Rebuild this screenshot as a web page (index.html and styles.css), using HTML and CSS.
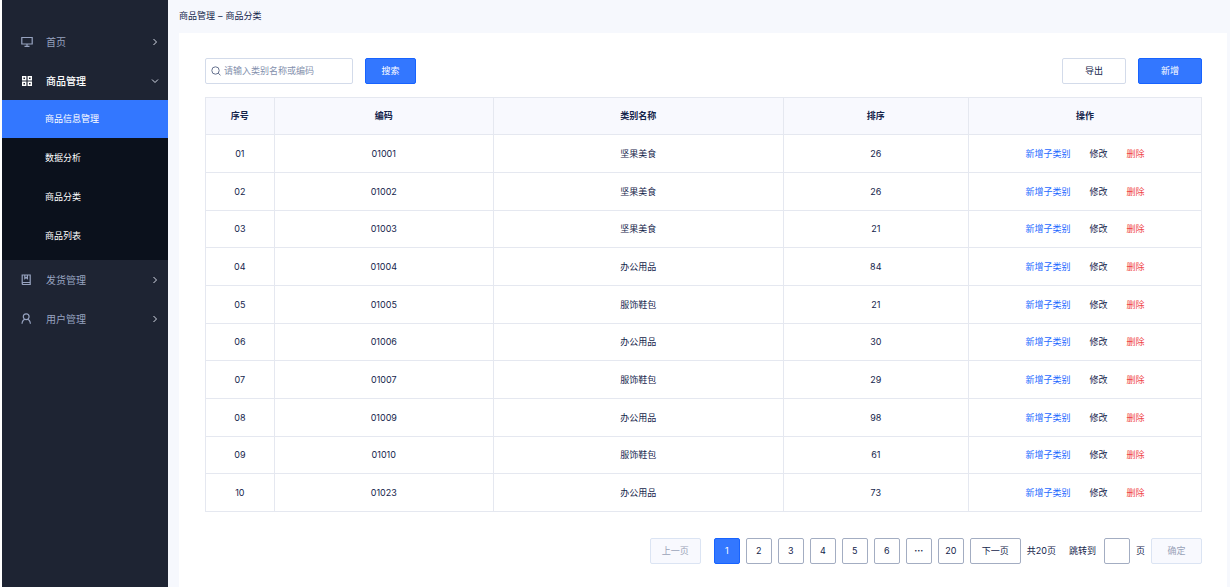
FILE: index.html
```html
<!DOCTYPE html>
<html lang="zh-CN">
<head>
<meta charset="utf-8">
<title>商品分类</title>
<meta name="viewport" content="width=device-width, initial-scale=1">
<link rel="stylesheet" href="styles.css">
</head>
<body>
<div class="layout">
  <nav class="sidebar" aria-label="主菜单">
    <a class="menu-item" href="#">
      <svg class="menu-icon" viewBox="0 0 12 12"><path d="M.8 1.500h10.400v6.500H.8zM6 8v2M3.500 10.300h5"/></svg>
      <span class="menu-label">首页</span>
      <svg class="arrow" viewBox="0 0 8 8"><path d="M2.500 1l3 3-3 3"/></svg>
    </a>
    <a class="menu-item open" href="#">
      <svg class="menu-icon bold" viewBox="0 0 12 12"><path d="M1.700 1.700h3v3h-3zM7.300 1.700h3v3h-3zM1.700 7.200h3v3h-3zM7.300 7.200h3v3h-3z"/></svg>
      <span class="menu-label">商品管理</span>
      <svg class="arrow" viewBox="0 0 8 8"><path d="M1 2.500l3 3 3-3"/></svg>
    </a>
    <div class="submenu">
      <a class="sub-item active" href="#">商品信息管理</a>
      <a class="sub-item" href="#">数据分析</a>
      <a class="sub-item" href="#">商品分类</a>
      <a class="sub-item" href="#">商品列表</a>
    </div>
    <a class="menu-item" href="#">
      <svg class="menu-icon" viewBox="0 0 12 12"><path d="M1.200 9.500V1h8v9.500h-7q-1 0-1-1t1-1h7M3.800 1v3.600l1.300-1 1.300 1V1"/></svg>
      <span class="menu-label">发货管理</span>
      <svg class="arrow" viewBox="0 0 8 8"><path d="M2.500 1l3 3-3 3"/></svg>
    </a>
    <a class="menu-item" href="#">
      <svg class="menu-icon" viewBox="0 0 12 12"><circle cx="5.200" cy="3.700" r="2.900"/><path d="M1 10.700q.4-4 3-4.400M9.400 10.700q-.4-4-3-4.400"/></svg>
      <span class="menu-label">用户管理</span>
      <svg class="arrow" viewBox="0 0 8 8"><path d="M2.500 1l3 3-3 3"/></svg>
    </a>
  </nav>

  <main class="main">
    <div class="breadcrumb"><span>商品管理</span><span>–</span><span>商品分类</span></div>
    <section class="card">
      <div class="toolbar">
        <label class="search">
          <svg class="search-icon" viewBox="0 0 10 10"><circle cx="4.500" cy="4.500" r="3.700"/><path d="M7.200 7.200L9.500 9.300"/></svg>
          <input class="search-input" type="text" aria-label="搜索" placeholder="请输入类别名称或编码">
        </label>
        <button class="btn primary" type="button">搜索</button>
        <span class="spacer"></span>
        <button class="btn wide" type="button">导出</button>
        <button class="btn wide primary" type="button">新增</button>
      </div>

      <table class="table">
        <colgroup><col class="col-no"><col class="col-code"><col class="col-name"><col class="col-sort"><col class="col-ops"></colgroup>
        <thead><tr><th>序号</th><th>编码</th><th>类别名称</th><th>排序</th><th>操作</th></tr></thead>
        <tbody>
          <tr><td>01</td><td>01001</td><td>坚果美食</td><td>26</td><td><div class="ops"><a class="add" href="#">新增子类别</a><a href="#">修改</a><a class="del" href="#">删除</a></div></td></tr>
          <tr><td>02</td><td>01002</td><td>坚果美食</td><td>26</td><td><div class="ops"><a class="add" href="#">新增子类别</a><a href="#">修改</a><a class="del" href="#">删除</a></div></td></tr>
          <tr><td>03</td><td>01003</td><td>坚果美食</td><td>21</td><td><div class="ops"><a class="add" href="#">新增子类别</a><a href="#">修改</a><a class="del" href="#">删除</a></div></td></tr>
          <tr><td>04</td><td>01004</td><td>办公用品</td><td>84</td><td><div class="ops"><a class="add" href="#">新增子类别</a><a href="#">修改</a><a class="del" href="#">删除</a></div></td></tr>
          <tr><td>05</td><td>01005</td><td>服饰鞋包</td><td>21</td><td><div class="ops"><a class="add" href="#">新增子类别</a><a href="#">修改</a><a class="del" href="#">删除</a></div></td></tr>
          <tr><td>06</td><td>01006</td><td>办公用品</td><td>30</td><td><div class="ops"><a class="add" href="#">新增子类别</a><a href="#">修改</a><a class="del" href="#">删除</a></div></td></tr>
          <tr><td>07</td><td>01007</td><td>服饰鞋包</td><td>29</td><td><div class="ops"><a class="add" href="#">新增子类别</a><a href="#">修改</a><a class="del" href="#">删除</a></div></td></tr>
          <tr><td>08</td><td>01009</td><td>办公用品</td><td>98</td><td><div class="ops"><a class="add" href="#">新增子类别</a><a href="#">修改</a><a class="del" href="#">删除</a></div></td></tr>
          <tr><td>09</td><td>01010</td><td>服饰鞋包</td><td>61</td><td><div class="ops"><a class="add" href="#">新增子类别</a><a href="#">修改</a><a class="del" href="#">删除</a></div></td></tr>
          <tr><td>10</td><td>01023</td><td>办公用品</td><td>73</td><td><div class="ops"><a class="add" href="#">新增子类别</a><a href="#">修改</a><a class="del" href="#">删除</a></div></td></tr>
        </tbody>
      </table>

      <div class="pager">
        <button class="btn prev" type="button" disabled>上一页</button>
        <button class="page primary" type="button">1</button>
        <button class="page" type="button">2</button>
        <button class="page" type="button">3</button>
        <button class="page" type="button">4</button>
        <button class="page" type="button">5</button>
        <button class="page" type="button">6</button>
        <button class="page more" type="button" aria-label="更多">···</button>
        <button class="page" type="button">20</button>
        <button class="btn next" type="button">下一页</button>
        <span class="total">共20页</span>
        <label class="jump">跳转到 <input class="page" type="text" aria-label="页码"></label>
        <span>页</span>
        <button class="btn" type="button" disabled>确定</button>
      </div>
    </section>
  </main>
</div>
</body>
</html>
```
FILE: styles.css
```css
* { box-sizing: border-box; }

body {
  margin: 0;
  background: #f6f8fd;
  color: #14244b;
  font: 9px/14px Inter, "Noto Sans CJK SC", sans-serif;
}

a { color: inherit; text-decoration: none; }

button, input { font: inherit; color: inherit; }

svg { fill: none; stroke: currentColor; }

.layout { display: flex; min-height: 100vh; }

/* Sidebar */
.sidebar {
  flex: none;
  width: 168px;
  padding-top: 22px;
  border-left: 2px solid #fff;
  background: #1e2433;
}

.menu-item {
  display: flex;
  align-items: center;
  height: 39px;
  padding: 0 9px 0 19px;
  color: #97a3c0;
  font-size: 10px;
}

.menu-item.open { color: #fff; font-weight: 500; }
.menu-icon { width: 12px; height: 12px; margin-right: 13px; stroke-width: 1.2; }
.menu-icon.bold { stroke-width: 1.4; }
.menu-label { flex: 1; }
.arrow { width: 8px; height: 8px; color: #d5dae6; }

.submenu { padding-bottom: 5px; background: #0b111c; }

.sub-item {
  display: flex;
  align-items: center;
  height: 39px;
  padding-left: 43px;
  color: #fff;
}

.sub-item.active { height: 38px; background: #3377ff; }

/* Content */
.main {
  display: flex;
  flex: 1;
  flex-direction: column;
  min-width: 0;
  padding: 0 3px 0 11px;
}

.breadcrumb { display: flex; gap: 3px; padding: 9px 0 10px; }

.card { flex: 1; padding: 25px 25px 23px 26px; background: #fff; }

.toolbar { display: flex; gap: 12px; margin-bottom: 13px; }
.spacer { flex: 1; }

.search {
  display: flex;
  align-items: center;
  gap: 3px;
  width: 148px;
  height: 26px;
  padding: 0 5px;
  border: 1px solid #d3dbea;
  border-radius: 2px;
  color: #66728f;
}

.search-icon { flex: none; width: 10px; height: 10px; }

.search-input {
  width: 100%;
  padding: 0;
  border: 0;
  outline: 0;
  background: none;
}

.search-input::placeholder { color: #8490ad; opacity: 1; }

.btn, .page {
  height: 26px;
  padding: 0;
  border: 1px solid #d3dbea;
  border-radius: 2px;
  background: #fff;
  text-align: center;
}

.btn { width: 51px; }
.btn.wide { width: 64px; }
.page { width: 26px; border-color: #a3adc2; }
.more { font-weight: 700; }
.next { border-color: #a3adc2; }
.btn.primary, .page.primary { border-color: #1763ff; background: #3377ff; color: #fff; }
.btn:disabled { border-color: #dbe4f3; background: #f8f9fe; color: #98a2b8; }

/* Table */
.table {
  width: 100%;
  border-collapse: collapse;
  table-layout: fixed;
  text-align: center;
}

.col-no { width: 6.900%; }
.col-code { width: 22%; }
.col-name { width: 29.100%; }
.col-sort { width: 18.600%; }
.col-ops { width: 23.400%; }

.table th, .table td {
  height: 38px;
  padding: 0;
  border: 1px solid #e5e8f0;
}

.table th { height: 37px; background: #f8f9fe; font-weight: 700; }
.table tbody tr:nth-child(3n) td { height: 37px; }

.ops { display: flex; justify-content: center; gap: 19px; }
.add { color: #1e69ff; }
.del { color: #f04444; }

/* Pagination */
.pager {
  display: flex;
  align-items: center;
  justify-content: flex-end;
  gap: 6px;
  margin-top: 26px;
}

.prev { margin-right: 7px; }
.total { margin-right: 7px; }
.jump { display: flex; align-items: center; gap: 8px; }
```
